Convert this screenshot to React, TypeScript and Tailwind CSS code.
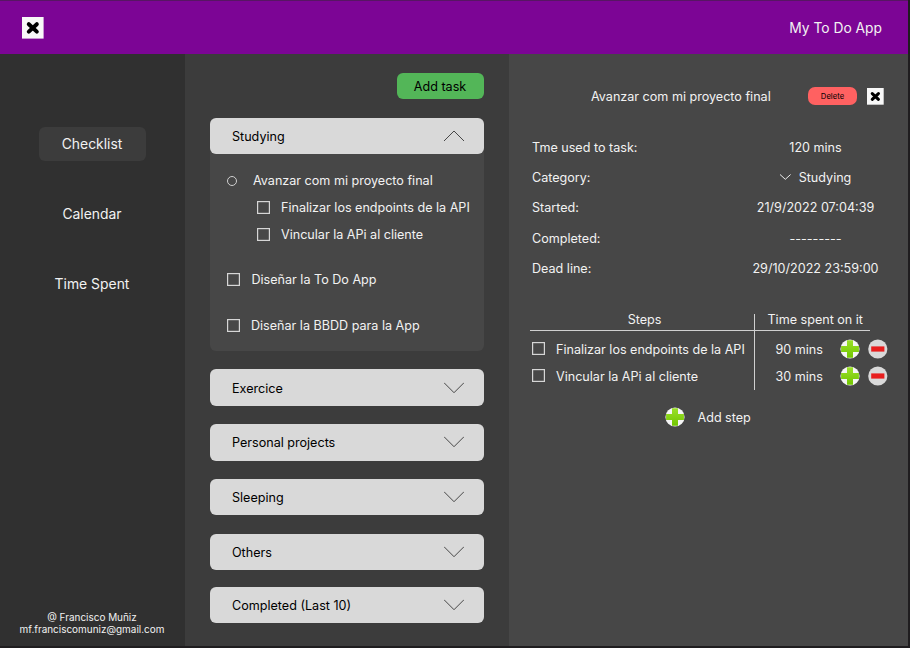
import React from "react";

function CloseIcon({ className }: { className: string }) {
  return (
    <svg viewBox="0 0 22 22" className={className} aria-label="Close">
      <rect width="21.6" height="21.6" fill="#f8f8f8" />
      <path d="M6.8 7.2L14.8 14.6M14.8 7.2L6.8 14.6" stroke="#000" strokeWidth="4" strokeLinecap="round" />
    </svg>
  );
}

function Chevron({ up = false }: { up?: boolean }) {
  return (
    <svg viewBox="0 0 20 12" className="h-3 w-5 shrink-0" fill="none" stroke="#222" strokeWidth="0.8">
      <path d={up ? "M0 11L10 1L20 11" : "M0 .7L10 10.7L20 .7"} />
    </svg>
  );
}

function Box() {
  return (
    <svg viewBox="0 0 13 13" className="size-[13px] shrink-0" fill="none">
      <rect x="0.6" y="0.6" width="11.8" height="11.8" stroke="#d6d6d6" strokeWidth="1.2" />
    </svg>
  );
}

function PlusIcon() {
  return (
    <svg viewBox="0 0 20 20" className="size-5 shrink-0">
      <defs>
        <linearGradient id="leaf" x1="0" y1="0" x2="0" y2="1">
          <stop offset="0" stopColor="#9be02a" />
          <stop offset="1" stopColor="#71c500" />
        </linearGradient>
      </defs>
      <circle cx="10" cy="10" r="9.6" fill="#f5f5f5" />
      <path d="M7 1.2h6V7h5.9v6H13v5.8H7V13H1.1V7H7z" fill="url(#leaf)" />
    </svg>
  );
}

function MinusIcon() {
  return (
    <svg viewBox="0 0 20 20" className="size-5 shrink-0">
      <circle cx="9.8" cy="10" r="9.6" fill="#d9d9d9" />
      <rect x="3.2" y="7.4" width="13.2" height="5.2" fill="#e81e1e" />
    </svg>
  );
}

function Section({ title, open = false, className = "" }: { title: string; open?: boolean; className?: string }) {
  return (
    <div className={`relative flex h-[36.5px] shrink-0 items-center justify-between rounded-[6px] bg-[#d9d9d9] pr-5 pl-[22px] text-black ${className}`}>
      <span className="pt-px">{title}</span>
      <Chevron up={open} />
    </div>
  );
}

function Detail({ label, value, className }: { label: string; value: React.ReactNode; className: string }) {
  return (
    <div className={`flex items-center justify-between ${className}`}>
      <span>{label}</span>
      <span className="flex w-[140px] items-center justify-center">{value}</span>
    </div>
  );
}

function StepRow({ name, time }: { name: string; time: string }) {
  return (
    <div className="flex h-[27px] items-center">
      <Box />
      <span className="ml-[11px] w-[219.5px] pt-px">{name}</span>
      <span className="w-[64.5px] pt-px">{time}</span>
      <PlusIcon />
      <span className="w-2" />
      <MinusIcon />
    </div>
  );
}

export default function App() {
  return (
    <div className="h-[648px] w-[910px] overflow-hidden bg-[#1f1d1f] font-['Inter',sans-serif] text-[12.58px] leading-[17px] font-normal whitespace-nowrap text-[#f2f2f2]">
      <div className="flex h-[646px] w-[908px] flex-col">
        <header className="flex h-[54px] shrink-0 items-center justify-between border-t border-[#571663] bg-[#7c0595] pr-[26px] pl-[22px]">
          <CloseIcon className="size-[22px]" />
          <span className="pt-px text-[13.8px]">My To Do App</span>
        </header>
        <div className="flex min-h-0 flex-1">
          <aside className="flex w-[185px] flex-col items-center bg-[#303030] pt-[73px] pr-px pb-[11px] text-[13.9px]">
            <div className="flex h-[34px] w-[107px] items-center justify-center rounded-[6px] bg-[#3c3c3c]">Checklist</div>
            <div className="mt-9 flex h-[34px] items-center">Calendar</div>
            <div className="mt-9 flex h-[34px] items-center">Time Spent</div>
            <div className="mt-auto text-center text-[9.95px] leading-3">
              <p>@ Francisco Muñiz</p>
              <p>mf.franciscomuniz@gmail.com</p>
            </div>
          </aside>

          <main className="flex w-[324px] flex-col bg-[#3c3c3c] pt-[19px] pr-[25.5px] pl-[25px]">
            <button className="h-[26px] w-[87px] shrink-0 self-end rounded-[6px] bg-[#53b658] pt-px text-black">Add task</button>
            <Section title="Studying" open className="mt-[18.5px]" />
            <div className="-mt-2 h-[205px] shrink-0 rounded-b-[6px] bg-[#474747] pt-[21px] pl-[17px]">
              <div className="flex h-[27px] items-center">
                <span className="block size-[10px] rounded-full border-[1.5px] border-[#d0d0d0]" />
                <span className="ml-[16px]">Avanzar com mi proyecto final</span>
              </div>
              <div className="flex h-[27px] items-center pl-[30px]"><Box /><span className="ml-[11px]">Finalizar los endpoints de la API</span></div>
              <div className="flex h-[27px] items-center pl-[30px]"><Box /><span className="ml-[11px]">Vincular la APi al cliente</span></div>
              <div className="mt-[18px] flex h-[27px] items-center"><Box /><span className="ml-[11.5px]">Diseñar la To Do App</span></div>
              <div className="mt-[19px] flex h-[27px] items-center"><Box /><span className="ml-[11px]">Diseñar la BBDD para la App</span></div>
            </div>
            <Section title="Exercice" className="mt-[18.3px]" />
            <Section title="Personal projects" className="mt-[18.3px]" />
            <Section title="Sleeping" className="mt-[18.3px]" />
            <Section title="Others" className="mt-[18.3px]" />
            <Section title="Completed (Last 10)" className="mt-[16.5px]" />
          </main>

          <section className="w-[399px] bg-[#474747] pt-[33px] pl-[21px]">
            <div className="flex h-[18px] items-center pl-[61px]">
              <span className="w-[217px]">Avanzar com mi proyecto final</span>
              <button className="h-[18px] w-[49px] rounded-[7px] bg-[#ff6161] pt-px text-[7.7px] text-black">Delete</button>
              <CloseIcon className="ml-[10px] size-[17px]" />
            </div>
            <div className="w-[355.5px] pt-[27px] pl-[2px]">
              <Detail className="h-[30px]" label="Tme used to task:" value="120 mins" />
              <Detail
                className="h-[30px]"
                label="Category:"
                value={
                  <>
                    <svg viewBox="0 0 11 6" className="mr-2 h-1.5 w-[11px]" fill="none" stroke="#fff" strokeWidth="0.9">
                      <path d="M0 .5L5.3 5.3L10.6 .5" />
                    </svg>
                    Studying
                  </>
                }
              />
              <Detail className="h-[31px]" label="Started:" value="21/9/2022 07:04:39" />
              <Detail className="h-[31px]" label="Completed:" value="---------" />
              <Detail className="h-[29px]" label="Dead line:" value="29/10/2022 23:59:00" />
            </div>
            <div className="relative mt-[31px] h-[76px]">
              <div className="flex h-[17px] w-[340px] items-start border-b border-[#d0d0d0]">
                <span className="-mt-[3px] w-[229px] text-center">Steps</span>
                <span className="-mt-[3px] ml-[8.5px]">Time spent on it</span>
              </div>
              <span className="absolute top-0 left-[224px] h-[76px] w-px bg-[#d0d0d0]" />
              <div className="pt-[4px] pl-[2px]">
                <StepRow name="Finalizar los endpoints de la API" time="90 mins" />
                <StepRow name="Vincular la APi al cliente" time="30 mins" />
              </div>
            </div>
            <div className="mt-[17px] flex h-5 items-center pl-[135px]">
              <PlusIcon />
              <span className="ml-[12.5px]">Add step</span>
            </div>
          </section>
        </div>
      </div>
    </div>
  );
}
